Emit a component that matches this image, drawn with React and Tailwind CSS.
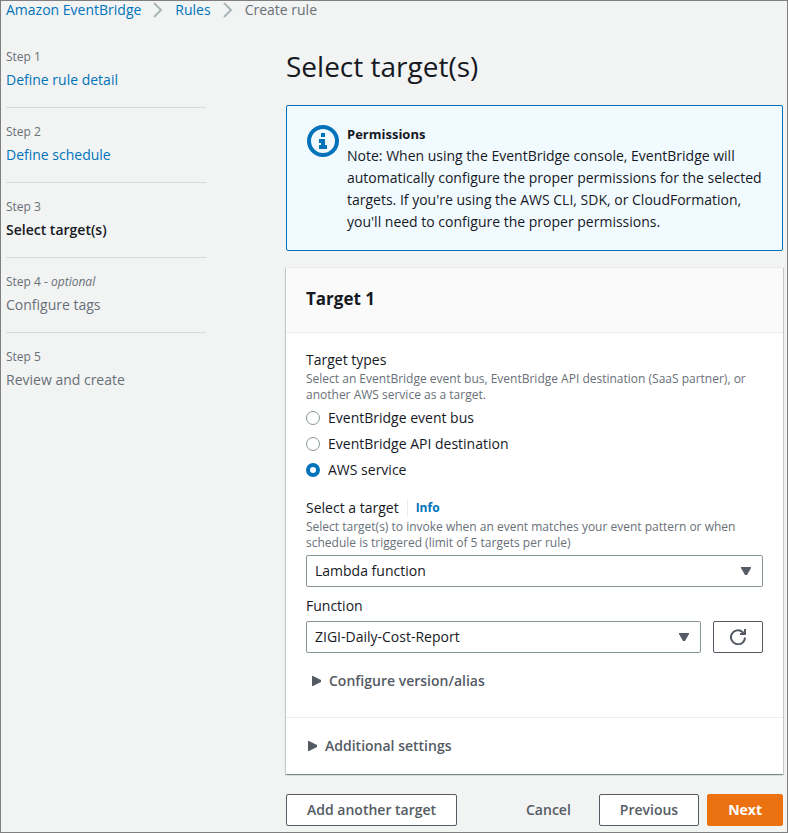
import React, { useState } from 'react'

const steps = [
  { label: 'Step 1', title: 'Define rule detail', state: 'done' },
  { label: 'Step 2', title: 'Define schedule', state: 'done' },
  { label: 'Step 3', title: 'Select target(s)', state: 'current' },
  { label: 'Step 4', title: 'Configure tags', state: 'todo', optional: true },
  { label: 'Step 5', title: 'Review and create', state: 'todo' }
]

const targetTypes = [
  { value: 'bus', label: 'EventBridge event bus' },
  { value: 'api', label: 'EventBridge API destination' },
  { value: 'service', label: 'AWS service' }
]

function Chevron() {
  return (
    <svg className="w-4 h-4 shrink-0" viewBox="0 0 16 16" fill="none" stroke="#aab7b8" strokeWidth="2">
      <path d="M4 1l7 7-7 7" />
    </svg>
  )
}

function InfoIcon() {
  return (
    <svg className="w-8 h-8 mt-[2px] shrink-0" viewBox="0 0 32 32">
      <circle cx="16" cy="16" r="14" fill="none" stroke="#0073bb" strokeWidth="4" />
      <path d="M14 8h4v4h-4zM12 14h6v6h2v4h-8v-4h2v-2h-2z" fill="#0073bb" />
    </svg>
  )
}

function RefreshIcon() {
  return (
    <svg className="w-4 h-4" viewBox="0 0 16 16" fill="none" stroke="#545b64" strokeWidth="2">
      <path d="M15 8.5A7 7 0 1 1 12.8 3.2L15 5" />
      <path d="M15 0v5h-5" />
    </svg>
  )
}

function SelectBox({ id, options }) {
  return (
    <div className="grid grow items-center">
      <select
        id={id}
        className="col-start-1 row-start-1 appearance-none w-full h-8 pl-2 pr-8 bg-white border border-[#879596] rounded-xs text-[#16191f]"
      >
        {options.map((option) => (
          <option key={option}>{option}</option>
        ))}
      </select>
      <svg className="col-start-1 row-start-1 justify-self-end mr-3 w-[10px] h-2 pointer-events-none" viewBox="0 0 10 8">
        <path d="M0 0h10v1L6 8H4L0 1z" fill="#545b64" />
      </svg>
    </div>
  )
}

function Expander({ children }) {
  return (
    <button type="button" className="flex items-center gap-2 font-semibold text-[#545b64]">
      <svg className="w-[9px] h-[10px]" viewBox="0 0 9 10">
        <path d="M0 0h1l8 4v2l-8 4H0z" fill="#545b64" />
      </svg>
      {children}
    </button>
  )
}

function StepItem({ step }) {
  return (
    <li className="py-4 border-b border-[#d5dbdb] first:pt-0 last:border-b-0">
      <div className="mb-1 text-[12px] leading-4 text-[#687078]">
        {step.label}
        {step.optional && <> - <i>optional</i></>}
      </div>
      {step.state === 'done' && <a href="#" className="block text-[#0073bb]">{step.title}</a>}
      {step.state === 'current' && <div className="font-semibold">{step.title}</div>}
      {step.state === 'todo' && <div className="text-[#687078]">{step.title}</div>}
    </li>
  )
}

export default function App() {
  const [targetType, setTargetType] = useState('service')

  return (
    <div className="min-h-screen pl-[5px] pr-1 pb-[6px] bg-[#f2f3f3] border border-[#7f7f7f] font-['Open_Sans','Noto_Sans',sans-serif] text-[14px] leading-[22px] text-[#16191f]">
      {/* Breadcrumbs */}
      <nav className="flex items-center -mt-[2px]">
        <a href="#" className="text-[#0073bb]">Amazon EventBridge</a>
        <span className="px-[9px]"><Chevron /></span>
        <a href="#" className="text-[#0073bb]">Rules</a>
        <span className="px-[9px]"><Chevron /></span>
        <span className="text-[#687078]">Create rule</span>
      </nav>

      <div className="flex items-start gap-20 pt-7">
        <ol className="w-[200px] shrink-0">
          {steps.map((step) => (
            <StepItem key={step.label} step={step} />
          ))}
        </ol>

        <main className="grow min-w-0">
          <h1 className="mb-[22px] text-[28px] leading-[34px]">Select target(s)</h1>

          <section className="flex gap-2 mb-4 px-5 py-[17px] bg-[#f1faff] border border-[#0073bb] rounded-xs">
            <InfoIcon />
            <div>
              <h2 className="font-bold text-[13px]">Permissions</h2>
              <p>
                Note: When using the EventBridge console, EventBridge will automatically configure the
                proper permissions for the selected targets. If you're using the AWS CLI, SDK, or
                CloudFormation, you'll need to configure the proper permissions.
              </p>
            </div>
          </section>

          <section className="bg-white border-t border-[#eaeded] shadow-[0_1px_1px_0_rgba(0,28,36,0.3),1px_1px_1px_0_rgba(0,28,36,0.15),-1px_1px_1px_0_rgba(0,28,36,0.15)]">
            <header className="px-5 pt-5 pb-[22px] bg-[#fafafa] border-b border-[#eaeded]">
              <h2 className="text-[17px] font-bold">Target 1</h2>
            </header>

            <div className="px-5 pt-4 pb-[25px]">
              <fieldset>
                <legend>Target types</legend>
                <p className="mb-1 text-[12px] leading-4 text-[#687078]">
                  Select an EventBridge event bus, EventBridge API destination (SaaS partner), or another
                  AWS service as a target.
                </p>
                <div className="flex flex-col gap-1">
                  {targetTypes.map((type) => (
                    <label key={type.value} className="flex items-center gap-2">
                      <input
                        type="radio"
                        name="target-type"
                        value={type.value}
                        checked={targetType === type.value}
                        onChange={() => setTargetType(type.value)}
                        className="appearance-none w-[14px] h-[14px] bg-white border border-[#879596] rounded-full checked:border-4 checked:border-[#0073bb]"
                      />
                      {type.label}
                    </label>
                  ))}
                </div>
              </fieldset>

              <div className="flex items-center mt-4">
                <label htmlFor="target">Select a target</label>
                <a href="#" className="ml-2 pl-2 h-4 leading-4 border-l border-[#eaeded] text-[12px] font-bold text-[#0073bb]">
                  Info
                </a>
              </div>
              <p className="mb-1 text-[12px] leading-4 text-[#687078]">
                Select target(s) to invoke when an event matches your event pattern or when schedule is
                triggered (limit of 5 targets per rule)
              </p>
              <SelectBox id="target" options={['Lambda function']} />

              <label htmlFor="function" className="block mt-2 mb-1">Function</label>
              <div className="flex gap-3">
                <SelectBox id="function" options={['ZIGI-Daily-Cost-Report']} />
                <button
                  type="button"
                  aria-label="Refresh"
                  className="flex items-center justify-center w-[50px] h-8 bg-white border border-[#545b64] rounded-xs"
                >
                  <RefreshIcon />
                </button>
              </div>

              <div className="mt-[17px] pl-[6px]">
                <Expander>Configure version/alias</Expander>
              </div>
            </div>

            <div className="px-[22px] py-[17px] border-t border-[#eaeded]">
              <Expander>Additional settings</Expander>
            </div>
          </section>

          <div className="flex items-center mt-5 font-semibold text-[#545b64]">
            <button type="button" className="h-8 px-5 bg-white border border-[#545b64] rounded-xs">
              Add another target
            </button>
            <button type="button" className="h-8 px-5 ml-auto mr-2">Cancel</button>
            <button type="button" className="h-8 px-5 mr-2 bg-white border border-[#545b64] rounded-xs">
              Previous
            </button>
            <button type="button" className="h-8 px-5 bg-[#ec7211] border border-[#ec7211] rounded-xs font-bold text-white">
              Next
            </button>
          </div>
        </main>
      </div>
    </div>
  )
}
